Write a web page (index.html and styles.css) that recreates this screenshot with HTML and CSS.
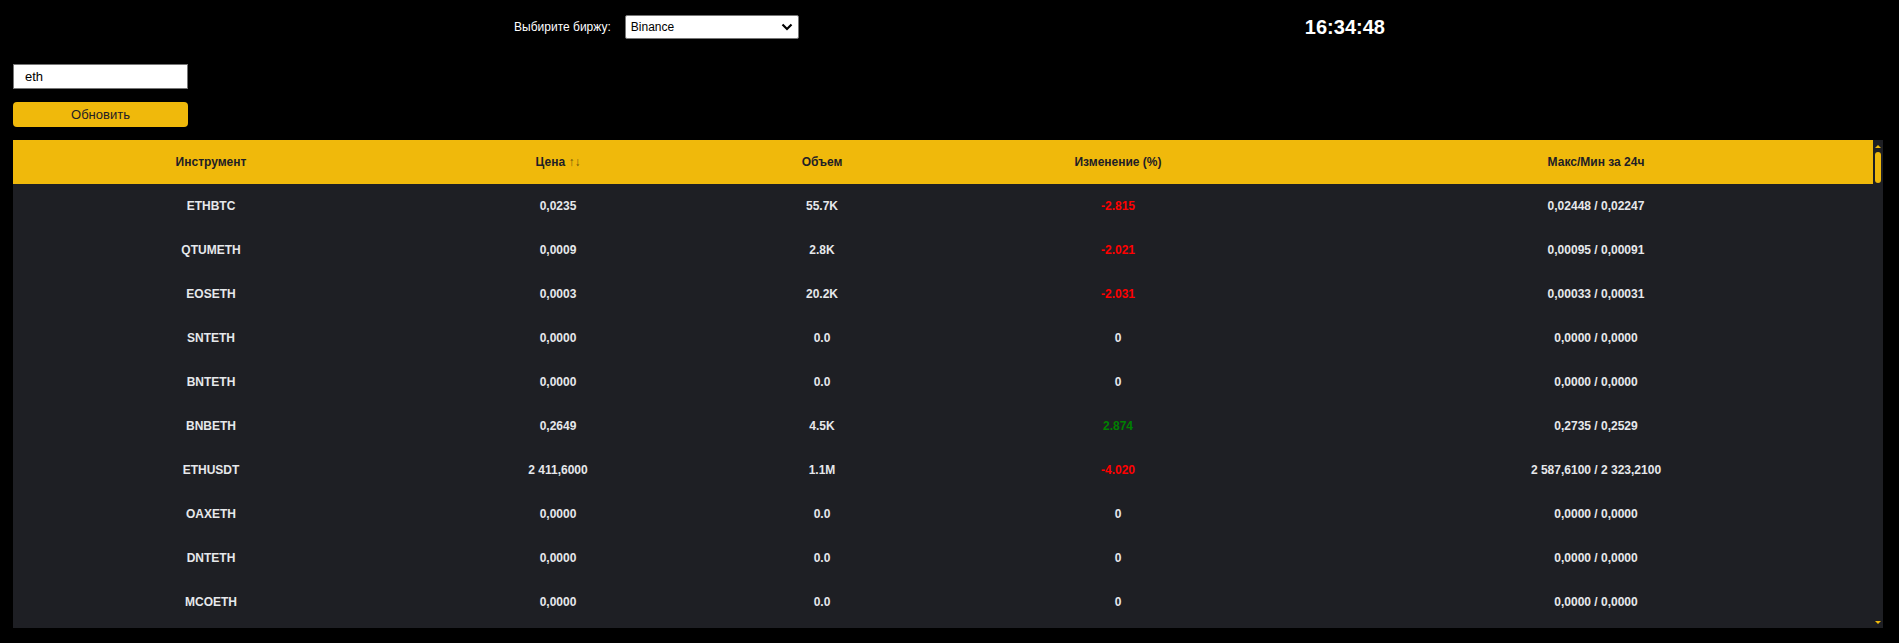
FILE: index.html
```html
<!DOCTYPE html>
<html lang="ru">
<head>
<meta charset="utf-8">
<title>Биржа</title>
<link rel="stylesheet" href="styles.css">
</head>
<body>
<div class="topbar">
  <div class="exchange">
    <label class="exchange-label" for="ex">Выбирите биржу:</label>
    <div class="select">
      <span>Binance</span>
      <svg class="chev" width="12" height="8" viewBox="0 0 12 8"><path d="M1.5 1.5 L6 6 L10.5 1.5" fill="none" stroke="#000" stroke-width="2.2"/></svg>
    </div>
  </div>
  <div class="clock">16:34:48</div>
</div>
<div class="controls">
  <div class="search">eth</div>
  <button class="refresh">Обновить</button>
</div>
<div class="board">
  <div class="table-wrap">
    <table class="market">
      <colgroup>
        <col class="c1"><col class="c2"><col class="c3"><col class="c4"><col class="c5">
      </colgroup>
      <thead>
        <tr><th>Инструмент</th><th>Цена <span class="sort">↑↓</span></th><th>Объем</th><th class="chg">Изменение (%)</th><th class="hl">Макс/Мин за 24ч</th></tr>
      </thead>
      <tbody>
        <tr><td>ETHBTC</td><td>0,0235</td><td>55.7K</td><td class="chg neg">-2.815</td><td class="hl">0,02448 / 0,02247</td></tr>
        <tr><td>QTUMETH</td><td>0,0009</td><td>2.8K</td><td class="chg neg">-2.021</td><td class="hl">0,00095 / 0,00091</td></tr>
        <tr><td>EOSETH</td><td>0,0003</td><td>20.2K</td><td class="chg neg">-2.031</td><td class="hl">0,00033 / 0,00031</td></tr>
        <tr><td>SNTETH</td><td>0,0000</td><td>0.0</td><td class="chg">0</td><td class="hl">0,0000 / 0,0000</td></tr>
        <tr><td>BNTETH</td><td>0,0000</td><td>0.0</td><td class="chg">0</td><td class="hl">0,0000 / 0,0000</td></tr>
        <tr><td>BNBETH</td><td>0,2649</td><td>4.5K</td><td class="chg pos">2.874</td><td class="hl">0,2735 / 0,2529</td></tr>
        <tr><td>ETHUSDT</td><td>2 411,6000</td><td>1.1M</td><td class="chg neg">-4.020</td><td class="hl">2 587,6100 / 2 323,2100</td></tr>
        <tr><td>OAXETH</td><td>0,0000</td><td>0.0</td><td class="chg">0</td><td class="hl">0,0000 / 0,0000</td></tr>
        <tr><td>DNTETH</td><td>0,0000</td><td>0.0</td><td class="chg">0</td><td class="hl">0,0000 / 0,0000</td></tr>
        <tr><td>MCOETH</td><td>0,0000</td><td>0.0</td><td class="chg">0</td><td class="hl">0,0000 / 0,0000</td></tr>
      </tbody>
    </table>
  </div>
  <div class="scrollbar">
    <div class="arrow up"></div>
    <div class="track"><div class="thumb"></div></div>
    <div class="arrow down"></div>
  </div>
</div>
</body>
</html>
```
FILE: styles.css
```css
html, body {
  margin: 0;
  padding: 0;
  background: #000;
}
body {
  font-family: "Liberation Sans", Arial, sans-serif;
  color: #eaecef;
  width: 1899px;
  height: 643px;
  overflow: hidden;
}
.topbar {
  display: flex;
  justify-content: space-evenly;
  align-items: center;
  margin: 0 8px;
  padding-top: 15px;
  height: 24px;
}
.exchange {
  display: flex;
  align-items: center;
  gap: 14px;
}
.exchange-label {
  font-size: 12px;
  color: #fff;
}
.select {
  box-sizing: border-box;
  width: 174px;
  height: 24px;
  background: #fff;
  border: 1px solid #767676;
  border-radius: 2px;
  display: flex;
  align-items: center;
  justify-content: space-between;
  padding: 0 5px 0 5px;
  font-size: 12px;
  color: #000;
}
.chev { display: block; }
.clock {
  font-size: 20px;
  font-weight: bold;
  color: #fff;
}
.controls {
  display: flex;
  flex-direction: column;
  gap: 13px;
  margin: 25px 0 0 13px;
  width: 175px;
}
.search {
  box-sizing: border-box;
  height: 25px;
  background: #fff;
  border: 1px solid #767676;
  font-size: 13px;
  color: #000;
  padding: 0 0 0 11px;
  display: flex;
  align-items: center;
}
.refresh {
  box-sizing: border-box;
  height: 25px;
  background: #f0b90b;
  border: none;
  border-radius: 4px;
  font-family: "Liberation Sans", Arial, sans-serif;
  font-size: 13px;
  color: #1e2026;
  padding: 0;
}
.board {
  display: flex;
  margin: 13px 0 0 13px;
  width: 1870px;
  height: 488px;
  background: #1e1f24;
}
.table-wrap {
  flex: 1;
  overflow: hidden;
}
.market {
  width: 100%;
  border-collapse: collapse;
  table-layout: fixed;
  font-size: 12px;
  font-weight: bold;
}
.c1 { width: 396px; }
.c2 { width: 298px; }
.c3 { width: 230px; }
.c4 { width: 372px; }
.c5 { width: 564px; }
.market th {
  background: #f0b90b;
  color: #1e2026;
  height: 44px;
  padding: 0;
  text-align: center;
  font-weight: bold;
}
.sort { color: #6a5208; font-weight: normal; }
.market td {
  height: 44px;
  padding: 0;
  text-align: center;
  color: #e6e8eb;
}
.market .chg { padding-right: 10px; }
.market .hl { padding-left: 10px; }
.market td.neg { color: #ff0000; }
.market td.pos { color: #008000; }
.scrollbar {
  width: 10px;
  display: flex;
  flex-direction: column;
  align-items: center;
}
.arrow {
  height: 10px;
  width: 10px;
  display: flex;
  justify-content: center;
  align-items: center;
}
.arrow::before {
  content: "";
  width: 0;
  height: 0;
  border-left: 3px solid transparent;
  border-right: 3px solid transparent;
}
.arrow.up::before { border-bottom: 3px solid #f0b90b; margin-top: 2px; }
.arrow.down::before { border-top: 3px solid #f0b90b; margin-bottom: 2px; }
.track {
  flex: 1;
  width: 10px;
  display: flex;
  justify-content: center;
  padding-top: 2px;
}
.thumb {
  width: 6px;
  height: 31px;
  background: #f0b90b;
  border-radius: 3px;
}
```
